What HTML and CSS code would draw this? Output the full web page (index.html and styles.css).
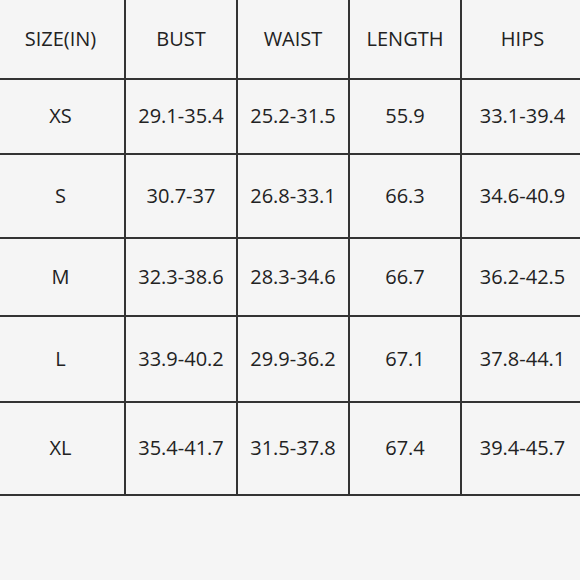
FILE: index.html
```html
<!DOCTYPE html>
<html>
<head>
<meta charset="utf-8">
<link rel="stylesheet" href="styles.css">
</head>
<body>
<div class="chart">
  <div class="cell first">SIZE(IN)</div><div class="cell">BUST</div><div class="cell">WAIST</div><div class="cell">LENGTH</div><div class="cell last">HIPS</div>
  <div class="cell first">XS</div><div class="cell">29.1-35.4</div><div class="cell">25.2-31.5</div><div class="cell">55.9</div><div class="cell last">33.1-39.4</div>
  <div class="cell first">S</div><div class="cell">30.7-37</div><div class="cell">26.8-33.1</div><div class="cell">66.3</div><div class="cell last">34.6-40.9</div>
  <div class="cell first">M</div><div class="cell">32.3-38.6</div><div class="cell">28.3-34.6</div><div class="cell">66.7</div><div class="cell last">36.2-42.5</div>
  <div class="cell first">L</div><div class="cell">33.9-40.2</div><div class="cell">29.9-36.2</div><div class="cell">67.1</div><div class="cell last">37.8-44.1</div>
  <div class="cell first">XL</div><div class="cell">35.4-41.7</div><div class="cell">31.5-37.8</div><div class="cell">67.4</div><div class="cell last">39.4-45.7</div>
</div>
</body>
</html>
```
FILE: styles.css
```css
html, body {
  margin: 0;
  padding: 0;
  background: #f5f5f5;
}
body {
  width: 580px;
  height: 580px;
  font-family: "Open Sans", "Noto Sans", sans-serif;
  font-size: 20px;
  color: #222;
}
.chart {
  display: grid;
  grid-template-columns: 126px 112px 112px 112px 118px;
  grid-template-rows: 80px 75px 84px 78px 86px 93px;
}
.cell {
  display: flex;
  align-items: center;
  justify-content: center;
  box-sizing: border-box;
  border-right: 2px solid #333;
  border-bottom: 2px solid #333;
  padding-bottom: 2px;
}
.cell.first {
  padding-right: 3px;
}
.cell.last {
  border-right: none;
  padding-left: 3px;
}
```
